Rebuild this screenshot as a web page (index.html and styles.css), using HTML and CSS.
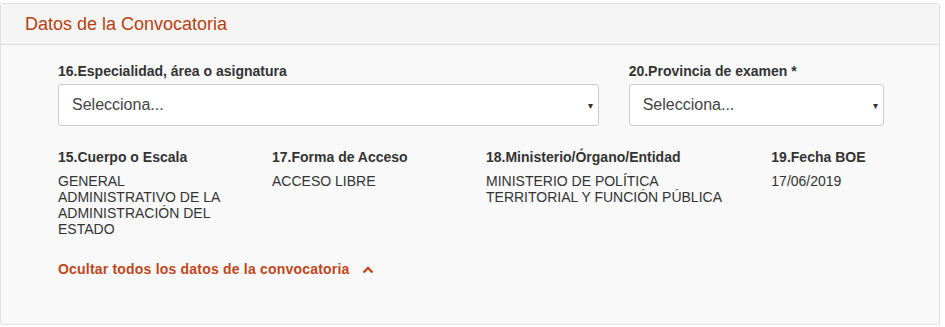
FILE: index.html
```html
<!DOCTYPE html>
<html lang="es">
<head>
<meta charset="utf-8">
<title>Datos de la Convocatoria</title>
<link rel="stylesheet" href="styles.css">
</head>
<body>
<div class="panel">
  <div class="panel-heading">Datos de la Convocatoria</div>
  <div class="panel-body">
    <div class="row row-top">
      <div class="col col-8">
        <label class="label">16.Especialidad, área o asignatura</label>
        <div class="select"><span>Selecciona...</span><span class="caret">&#9662;</span></div>
      </div>
      <div class="col col-4">
        <label class="label">20.Provincia de examen *</label>
        <div class="select"><span>Selecciona...</span><span class="caret">&#9662;</span></div>
      </div>
    </div>
    <div class="row row-data">
      <div class="col col-3">
        <div class="label">15.Cuerpo o Escala</div>
        <div class="value">GENERAL ADMINISTRATIVO DE LA ADMINISTRACIÓN DEL ESTADO</div>
      </div>
      <div class="col col-3">
        <div class="label">17.Forma de Acceso</div>
        <div class="value">ACCESO LIBRE</div>
      </div>
      <div class="col col-4">
        <div class="label">18.Ministerio/Órgano/Entidad</div>
        <div class="value">MINISTERIO DE POLÍTICA TERRITORIAL Y FUNCIÓN PÚBLICA</div>
      </div>
      <div class="col col-2">
        <div class="label">19.Fecha BOE</div>
        <div class="value">17/06/2019</div>
      </div>
    </div>
    <a class="toggle" href="#">Ocultar todos los datos de la convocatoria
      <svg class="chev" width="12" height="8" viewBox="0 0 12 8"><path d="M1.5 6.5 L6 2 L10.5 6.5" fill="none" stroke="#c0461c" stroke-width="2.4"/></svg>
    </a>
  </div>
</div>
</body>
</html>
```

FILE: styles.css
```css
* { box-sizing: border-box; }
html, body { margin: 0; padding: 0; background: #fff; }
body {
  font-family: "Liberation Sans", Arial, sans-serif;
  color: #333;
  font-size: 14px;
  padding-top: 3px;
}
.panel {
  width: 940px;
  height: 322px;
  background: #f9f9f9;
  border: 1px solid #e0e0e0;
  border-radius: 3px;
}
.panel-heading {
  height: 41px;
  background: #f5f5f5;
  border-bottom: 1px solid #dedede;
  color: #b8400f;
  font-size: 18px;
  padding: 10px 0 0 24px;
  line-height: 20px;
}
.panel-body {
  padding: 16px 40px 0 42px;
}
.row { display: flex; }
.col { padding: 0 15px; }
.col-8 { width: 66.6667%; }
.col-4 { width: 33.3333%; }
.col-3 { width: 25%; }
.col-2 { width: 16.6667%; }
.label {
  display: block;
  font-weight: bold;
  font-size: 14px;
  line-height: 20px;
  color: #333;
}
.select {
  margin-top: 3px;
  height: 42px;
  background: #fff;
  border: 1px solid #ccc;
  border-radius: 3px;
  display: flex;
  align-items: center;
  justify-content: space-between;
  padding: 0 5px 0 13px;
  font-size: 16px;
  color: #444;
}
.caret { font-size: 10px; color: #333; }
.row-data { margin-top: 21px; }
.value {
  margin-top: 6px;
  font-size: 14px;
  line-height: 16px;
  text-transform: uppercase;
}
.toggle {
  display: inline-flex;
  align-items: center;
  gap: 12px;
  margin: 24px 0 0 15px;
  color: #c0461c;
  font-weight: bold;
  font-size: 14px;
  letter-spacing: 0.2px;
  line-height: 17px;
  text-decoration: none;
}
.chev { display: block; }
```
